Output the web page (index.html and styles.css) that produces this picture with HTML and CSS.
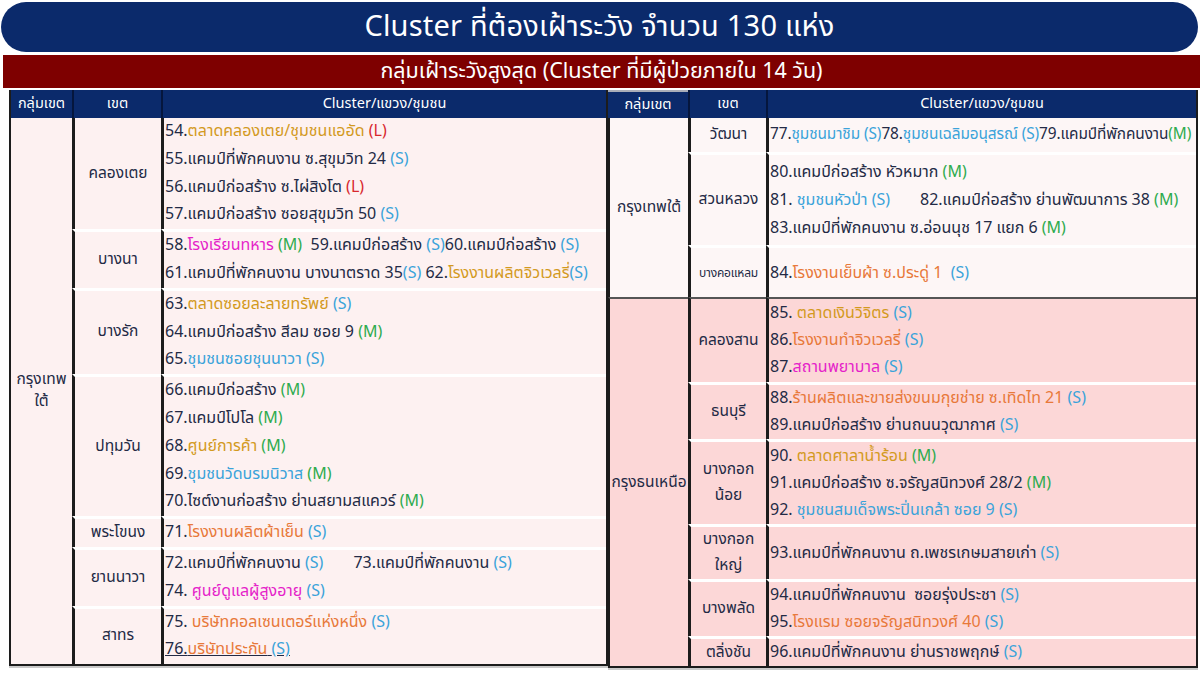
FILE: index.html
```html
<!DOCTYPE html>
<html lang="th">
<head>
<meta charset="utf-8">
<title>Cluster ที่ต้องเฝ้าระวัง</title>
<link rel="stylesheet" href="styles.css">
</head>
<body>
<div class="page">
  <div class="title">Cluster ที่ต้องเฝ้าระวัง จำนวน 130 แห่ง</div>
  <div class="subtitle">กลุ่มเฝ้าระวังสูงสุด (Cluster ที่มีผู้ป่วยภายใน 14 วัน)</div>
  <div class="tables">
    <table class="tbl left">
      <colgroup><col class="c1l"><col class="c2l"><col class="c3l"></colgroup>
      <thead>
        <tr><th>กลุ่มเขต</th><th>เขต</th><th>Cluster/แขวง/ชุมชน</th></tr>
      </thead>
      <tbody>
        <tr>
          <td class="grp" rowspan="7">กรุงเทพ<br>ใต้</td>
          <td class="ket first">คลองเตย</td>
          <td class="clu first">
            <div class="ln">54.<span class="gold">ตลาดคลองเตย/ชุมชนแออัด</span> <span class="L">(L)</span></div>
            <div class="ln">55.แคมป์ที่พักคนงาน ซ.สุขุมวิท 24 <span class="S">(S)</span></div>
            <div class="ln">56.แคมป์ก่อสร้าง ซ.ไผ่สิงโต <span class="L">(L)</span></div>
            <div class="ln">57.แคมป์ก่อสร้าง ซอยสุขุมวิท 50 <span class="S">(S)</span></div>
          </td>
        </tr>
        <tr>
          <td class="ket">บางนา</td>
          <td class="clu">
            <div class="ln">58.<span class="mag">โรงเรียนทหาร</span> <span class="M">(M)</span>&nbsp; 59.แคมป์ก่อสร้าง <span class="S">(S)</span>60.แคมป์ก่อสร้าง <span class="S">(S)</span></div>
            <div class="ln">61.แคมป์ที่พักคนงาน บางนาตราด 35<span class="S">(S)</span> 62.<span class="gold">โรงงานผลิตจิวเวลรี่</span><span class="S">(S)</span></div>
          </td>
        </tr>
        <tr>
          <td class="ket">บางรัก</td>
          <td class="clu">
            <div class="ln">63.<span class="gold">ตลาดซอยละลายทรัพย์</span> <span class="S">(S)</span></div>
            <div class="ln">64.แคมป์ก่อสร้าง สีลม ซอย 9 <span class="M">(M)</span></div>
            <div class="ln">65.<span class="blue">ชุมชนซอยชุนนาวา</span> <span class="S">(S)</span></div>
          </td>
        </tr>
        <tr>
          <td class="ket">ปทุมวัน</td>
          <td class="clu">
            <div class="ln">66.แคมป์ก่อสร้าง <span class="M">(M)</span></div>
            <div class="ln">67.แคมป์โปโล <span class="M">(M)</span></div>
            <div class="ln">68.<span class="gold">ศูนย์การค้า</span> <span class="M">(M)</span></div>
            <div class="ln">69.<span class="blue">ชุมชนวัดบรมนิวาส</span> <span class="M">(M)</span></div>
            <div class="ln">70.ไซต์งานก่อสร้าง ย่านสยามสแควร์ <span class="M">(M)</span></div>
          </td>
        </tr>
        <tr>
          <td class="ket">พระโขนง</td>
          <td class="clu">
            <div class="ln">71.<span class="orange">โรงงานผลิตผ้าเย็น</span> <span class="S">(S)</span></div>
          </td>
        </tr>
        <tr>
          <td class="ket">ยานนาวา</td>
          <td class="clu">
            <div class="ln">72.แคมป์ที่พักคนงาน <span class="S">(S)</span><span class="gap"></span>73.แคมป์ที่พักคนงาน <span class="S">(S)</span></div>
            <div class="ln">74. <span class="mag">ศูนย์ดูแลผู้สูงอายุ</span> <span class="S">(S)</span></div>
          </td>
        </tr>
        <tr>
          <td class="ket">สาทร</td>
          <td class="clu">
            <div class="ln">75. <span class="orange">บริษัทคอลเซนเตอร์แห่งหนึ่ง</span> <span class="S">(S)</span></div>
            <div class="ln"><span class="ul">76.<span class="orange">บริษัทประกัน</span> <span class="S">(S)</span></span></div>
          </td>
        </tr>
      </tbody>
    </table>

    <table class="tbl right">
      <colgroup><col class="c1r"><col class="c2r"><col class="c3r"></colgroup>
      <thead>
        <tr><th>กลุ่มเขต</th><th>เขต</th><th>Cluster/แขวง/ชุมชน</th></tr>
      </thead>
      <tbody class="south">
        <tr class="r34">
          <td class="grp" rowspan="3">กรุงเทพใต้</td>
          <td class="ket first">วัฒนา</td>
          <td class="clu first">
            <div class="ln tight">77.<span class="blue">ชุมชนมาชิม</span> <span class="S">(S)</span>78.<span class="blue">ชุมชนเฉลิมอนุสรณ์</span> <span class="S">(S)</span>79.แคมป์ที่พักคนงาน<span class="M">(M)</span></div>
          </td>
        </tr>
        <tr class="r93">
          <td class="ket">สวนหลวง</td>
          <td class="clu">
            <div class="ln">80.แคมป์ก่อสร้าง หัวหมาก <span class="M">(M)</span></div>
            <div class="ln">81. <span class="blue">ชุมชนหัวป่า</span> <span class="S">(S)</span><span class="gap"></span>82.แคมป์ก่อสร้าง ย่านพัฒนาการ 38 <span class="M">(M)</span></div>
            <div class="ln">83.แคมป์ที่พักคนงาน ซ.อ่อนนุช 17 แยก 6 <span class="M">(M)</span></div>
          </td>
        </tr>
        <tr class="r52">
          <td class="ket small">บางคอแหลม</td>
          <td class="clu">
            <div class="ln">84.<span class="orange">โรงงานเย็บผ้า ซ.ประดู่ 1</span>&nbsp; <span class="S">(S)</span></div>
          </td>
        </tr>
      </tbody>
      <tbody class="north">
        <tr class="r85">
          <td class="grp top" rowspan="6">กรุงธนเหนือ</td>
          <td class="ket top">คลองสาน</td>
          <td class="clu top">
            <div class="ln">85. <span class="gold">ตลาดเงินวิจิตร</span> <span class="S">(S)</span></div>
            <div class="ln">86.<span class="orange">โรงงานทำจิวเวลรี่</span> <span class="S">(S)</span></div>
            <div class="ln">87.<span class="mag">สถานพยาบาล</span> <span class="S">(S)</span></div>
          </td>
        </tr>
        <tr class="r57">
          <td class="ket">ธนบุรี</td>
          <td class="clu">
            <div class="ln">88.<span class="orange">ร้านผลิตและขายส่งขนมกุยช่าย ซ.เทิดไท 21</span> <span class="S">(S)</span></div>
            <div class="ln">89.แคมป์ก่อสร้าง ย่านถนนวุฒากาศ <span class="S">(S)</span></div>
          </td>
        </tr>
        <tr class="r85">
          <td class="ket">บางกอก<br>น้อย</td>
          <td class="clu">
            <div class="ln">90. <span class="gold">ตลาดศาลาน้ำร้อน</span> <span class="M">(M)</span></div>
            <div class="ln">91.แคมป์ก่อสร้าง ซ.จรัญสนิทวงศ์ 28/2 <span class="M">(M)</span></div>
            <div class="ln">92. <span class="blue">ชุมชนสมเด็จพระปิ่นเกล้า ซอย 9</span> <span class="S">(S)</span></div>
          </td>
        </tr>
        <tr class="r55">
          <td class="ket">บางกอก<br>ใหญ่</td>
          <td class="clu">
            <div class="ln">93.แคมป์ที่พักคนงาน ถ.เพชรเกษมสายเก่า <span class="S">(S)</span></div>
          </td>
        </tr>
        <tr class="r55">
          <td class="ket">บางพลัด</td>
          <td class="clu">
            <div class="ln">94.แคมป์ที่พักคนงาน&nbsp; ซอยรุ่งประชา <span class="S">(S)</span></div>
            <div class="ln">95.<span class="orange">โรงแรม ซอยจรัญสนิทวงศ์ 40</span> <span class="S">(S)</span></div>
          </td>
        </tr>
        <tr class="r30">
          <td class="ket">ตลิ่งชัน</td>
          <td class="clu">
            <div class="ln">96.แคมป์ที่พักคนงาน ย่านราชพฤกษ์ <span class="S">(S)</span></div>
          </td>
        </tr>
      </tbody>
    </table>
  </div>
</div>
</body>
</html>
```

FILE: styles.css
```css
* { box-sizing: border-box; }
html, body { margin: 0; padding: 0; background: #ffffff; }
body {
  width: 1200px;
  height: 675px;
  overflow: hidden;
  font-family: Tahoma, "Noto Sans Thai", "Leelawadee UI", "Noto Sans", "DejaVu Sans", sans-serif;
  color: #232a45;
}
.page {
  padding: 2px 2px 0 0;
}
.title {
  height: 50px;
  margin-left: 1px;
  background: #0b2a6b;
  border-radius: 26px;
  color: #ffffff;
  font-size: 29px;
  line-height: 50px;
  text-align: center;
  letter-spacing: 0.2px;
}
.subtitle {
  margin: 3px -2px 0 3px;
  height: 33px;
  background: #7e0000;
  color: #ffffff;
  font-size: 21.5px;
  line-height: 33px;
  text-align: center;
}
.tables {
  display: flex;
  align-items: flex-start;
  margin-top: 2px;
  padding-left: 9px;
}
.tbl {
  border-collapse: separate;
  border-spacing: 0;
  table-layout: fixed;
  font-size: 16px;
  box-shadow: 0 2px 0 #c9c9c9;
}
.left { width: 599px; background: #fdf1f1; border: 2px solid #1c1c1c; border-top: 0; }
.right { width: 590px; border: 2px solid #1c1c1c; border-top: 0; border-left: 0; }
.c1l { width: 61px; }
.c2l { width: 89px; }
.c1r { width: 80px; }
.c2r { width: 78px; }
.tbl th {
  background: #0b2a6b;
  color: #ffffff;
  font-weight: normal;
  font-size: 14.5px;
  height: 28px;
  padding: 0;
  text-align: center;
  white-space: nowrap;
  border-left: 2px solid #05163d;
}
.left th:first-child { border-left: 0; }
.right th:first-child { border-left: 0; border-top: 2px solid #a9adb8; }
.tbl td {
  padding: 0;
  vertical-align: middle;
}
.grp {
  text-align: center;
  line-height: 22px;
  white-space: nowrap;
  font-size: 15.5px;
}
.right .grp { border-left: 2px solid #1c1c1c; }
.ket {
  text-align: center;
  border-left: 3px solid #1c1c1c;
  border-top: 3px solid #ffffff;
  line-height: 26px;
  font-size: 15.5px;
}
.clu {
  border-left: 3px solid #1c1c1c;
  border-top: 3px solid #ffffff;
  padding-left: 1px !important;
  white-space: nowrap;
}
.ket.first, .clu.first { border-top: 0; }
.left .ln { height: 27.8px; line-height: 27.8px; }
.south .ln { height: 28px; line-height: 28px; }
.north .ln { height: 27px; line-height: 27px; }
.right .ln.tight { font-size: 15.4px; letter-spacing: -0.1px; }
.small { font-size: 12px; letter-spacing: -0.2px; white-space: nowrap; }
.south td { background: #fdf6f6; }
.north td { background: #fcd7d7; }
.top { border-top: 2px solid #555555 !important; }
.r34 td { height: 34px; }
.r93 td { height: 93px; }
.r52 td { height: 52px; }
.r85 td { height: 85px; }
.r57 td { height: 57px; }
.r55 td { height: 55px; }
.r30 td { height: 30px; }
.gold { color: #d39a1e; }
.orange { color: #e8793a; }
.mag { color: #e51fc9; }
.blue { color: #3aa3da; }
.S { color: #3aa3da; }
.M { color: #2eab4e; }
.L { color: #d8282e; }
.gap { display: inline-block; width: 30px; }
.ul { text-decoration: underline; }
```
